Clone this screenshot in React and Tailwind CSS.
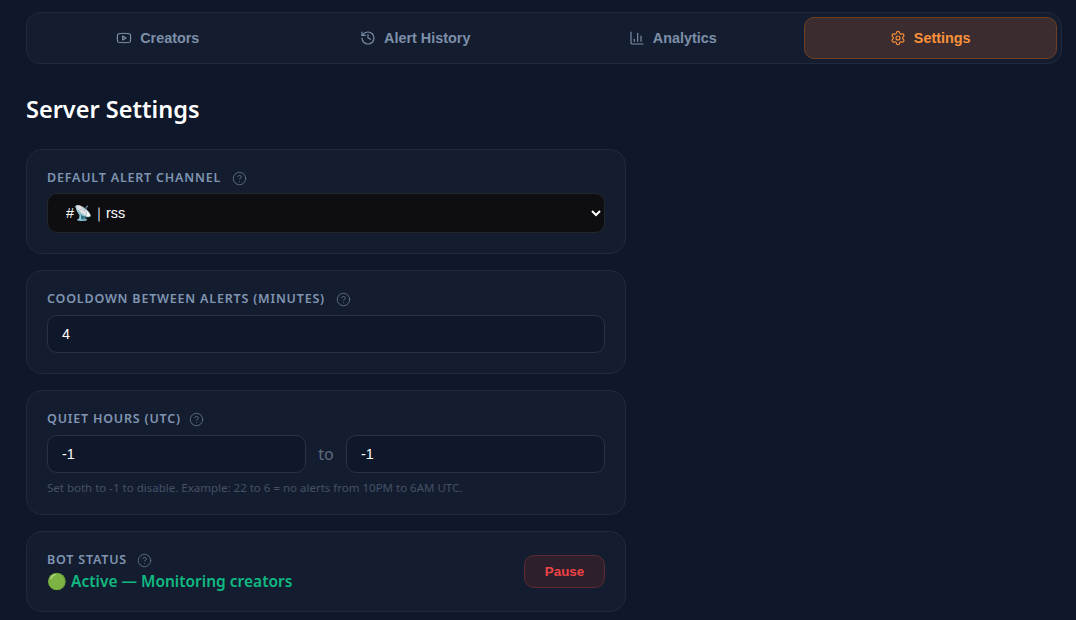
import React from "react";
import { CircleHelp, History, ChartColumn, Settings, Youtube } from "lucide-react";

const uiFont = "font-['Noto_Sans','Open_Sans',sans-serif]";

const tabs = [
  { label: "Creators", icon: Youtube },
  { label: "Alert History", icon: History },
  { label: "Analytics", icon: ChartColumn },
  { label: "Settings", icon: Settings, active: true },
];

function Tab({ tab }) {
  const Icon = tab.icon;
  return (
    <button
      className={
        tab.active
          ? "h-[42px] flex items-center justify-center gap-2 rounded-[10px] border border-[#6f3f22] bg-[#3a2c2f] text-[14.4px] leading-[18px] font-bold text-[#fb923c]"
          : "h-[42px] flex items-center justify-center gap-2 rounded-[10px] border border-transparent text-[14.4px] leading-[18px] font-bold text-[#7d8fa9]"
      }
    >
      <Icon className="w-4 h-4" strokeWidth={1.75} />
      {tab.label}
    </button>
  );
}

function Label({ children, className = "gap-[11px]" }) {
  return (
    <div className={`flex items-center h-[18px] ${className}`}>
      <span className={`${uiFont} text-[12.5px] font-semibold uppercase tracking-[0.8px] text-[#8095b2]`}>
        {children}
      </span>
      <CircleHelp className="w-[15px] h-[15px] text-[#5d6b80]" strokeWidth={1.5} />
    </div>
  );
}

function NumberField({ value, className = "" }) {
  return (
    <input
      readOnly
      value={value}
      className={`h-[38px] rounded-[10px] border border-[#283245] bg-[#0f172a] px-[14px] text-[14.4px] text-white outline-none ${className}`}
    />
  );
}

function Card({ children, className = "" }) {
  return (
    <section className={`rounded-2xl border border-[#202a3c] bg-[#141d2f] px-5 ${className}`}>
      {children}
    </section>
  );
}

export default function App() {
  return (
    <div className="w-[1076px] h-[620px] overflow-hidden bg-[#0f172a] pt-3 pl-[26px] pr-[14px] font-['Liberation_Sans',Arial,sans-serif]">
      {/* Tabs */}
      <nav className="grid grid-cols-4 gap-1 h-[52px] rounded-[14px] border border-[#202a3c] bg-[#141d2f] p-1">
        {tabs.map((tab) => (
          <Tab key={tab.label} tab={tab} />
        ))}
      </nav>

      <h1 className={`${uiFont} mt-[30px] mb-[25px] h-[30px] leading-[30px] text-[23.5px] font-semibold text-white`}>
        Server Settings
      </h1>

      <div className="w-[600px] flex flex-col gap-4">
        <Card className="h-[105px] pt-[19px]">
          <div className="mb-[6px]">
            <Label>Default Alert Channel</Label>
          </div>
          <select className="w-full h-10 rounded-[10px] border border-[#24262c] bg-[#0e0e11] px-[14px] text-[14.4px] text-white outline-none">
            <option>#📡｜rss</option>
          </select>
        </Card>

        <Card className="h-[104px] pt-[19px]">
          <div className="mb-[7px]">
            <Label>Cooldown Between Alerts (Minutes)</Label>
          </div>
          <NumberField value="4" className="w-full" />
        </Card>

        <Card className="h-[125px] pt-[19px]">
          <div className="mb-[7px]">
            <Label className="gap-2">Quiet Hours (UTC)</Label>
          </div>
          <div className="flex items-center">
            <NumberField value="-1" className="w-[259px]" />
            <span className={`${uiFont} w-10 text-center text-[16px] text-[#5d6b80]`}>to</span>
            <NumberField value="-1" className="w-[259px]" />
          </div>
          <p className={`${uiFont} mt-[7px] text-[11.5px] leading-4 text-[#445166]`}>
            Set both to -1 to disable. Example: 22 to 6 = no alerts from 10PM to 6AM UTC.
          </p>
        </Card>

        <Card className="h-[81px] flex items-center justify-between">
          <div>
            <Label className="gap-[10px]">Bot Status</Label>
            <div className={`${uiFont} text-[15.5px] leading-[22px] font-semibold text-[#10b981]`}>
              <span className="text-[16px]">🟢</span> Active — Monitoring creators
            </div>
          </div>
          <button className="w-[81px] h-[33px] rounded-[10px] border border-[#5c2a33] bg-[#2e1f2c] text-[13.33px] font-bold text-[#ef4444]">
            Pause
          </button>
        </Card>
      </div>
    </div>
  );
}
